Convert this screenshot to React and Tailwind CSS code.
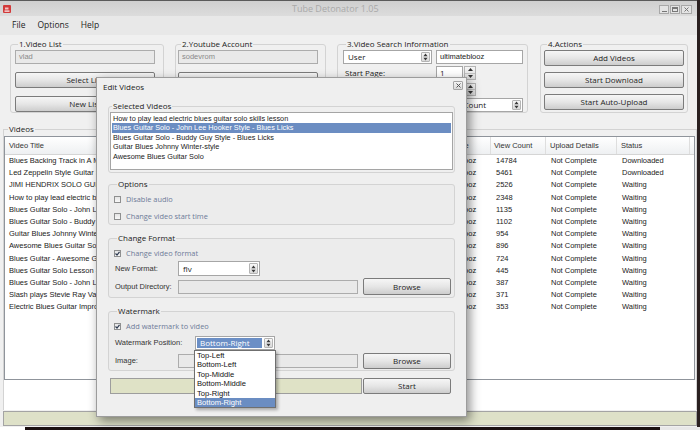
import React from 'react'

const UI = "font-[family-name:'Open_Sans','Noto_Sans',sans-serif]"
const SANS = "font-[family-name:'Liberation_Sans',Arial,sans-serif]"

// titles are only shown up to where the dialog covers them
const videos = [
  ['Blues Backing Track in A Mi', '14784', 'Downloaded'],
  ['Led Zeppelin Style Guitar So', '5461', 'Downloaded'],
  ['JIMI HENDRIX SOLO GUIT', '2526', 'Waiting'],
  ['How to play lead electric blu', '2348', 'Waiting'],
  ['Blues Guitar Solo - John Lee', '1135', 'Waiting'],
  ['Blues Guitar Solo - Buddy Gu', '1102', 'Waiting'],
  ['Guitar Blues Johnny Winter-', '954', 'Waiting'],
  ['Awesome Blues Guitar Solo', '896', 'Waiting'],
  ['Blues Guitar - Awesome Gui', '724', 'Waiting'],
  ['Blues Guitar Solo Lesson - S', '445', 'Waiting'],
  ['Blues Guitar Solo - John Lee ', '387', 'Waiting'],
  ['Slash plays Stevie Ray Vaug', '371', 'Waiting'],
  ['Electric Blues Guitar Improv', '353', 'Waiting'],
]

const selected = [
  'How to play lead electric blues guitar solo skills lesson',
  'Blues Guitar Solo - John Lee Hooker Style - Blues Licks',
  'Blues Guitar Solo - Buddy Guy Style - Blues Licks',
  'Guitar Blues Johnny Winter-style',
  'Awesome Blues Guitar Solo',
]

const positions = ['Top-Left', 'Bottom-Left', 'Top-Middle', 'Bottom-Middle', 'Top-Right', 'Bottom-Right']

const UpDown = () => (
  <svg width="5" height="8" viewBox="0 0 5 8">
    <path d="M2.5 0.5L4.6 3.2H0.4Z M2.5 7.5L4.6 4.8H0.4Z" fill="#3a3a3a" />
  </svg>
)

const Btn = ({ children, className = '' }) => (
  <div
    className={`flex items-center justify-center rounded-[2px] border border-[#7b7b7b] bg-linear-to-b from-[#f6f6f6] via-[#e6e6e6] to-[#cdcdcd] text-[8px] leading-none text-[#1e1e1e] ${UI} ${className}`}
  >
    {children}
  </div>
)

// button partly hidden by the dialog: text is clipped where the dialog starts
const CutBtn = ({ children }) => (
  <Btn className="mt-[8px] h-[16px] w-[140px] !justify-start">
    <div className="h-full w-[80px] overflow-hidden">
      <div className="flex h-full w-[138px] items-center justify-center">{children}</div>
    </div>
  </Btn>
)

const Input = ({ value, className = '' }) => (
  <div
    className={`flex items-center border border-[#acacac] bg-[#e9e9e9] pl-[3px] text-[7.5px] text-[#8a8a8a] ${SANS} ${className}`}
  >
    {value}
  </div>
)

const Select = ({ value, className = '', textClass = '' }) => (
  <div className={`flex items-stretch border border-[#a6a6a6] bg-white p-[1px] ${className}`}>
    <div className={`flex flex-1 items-center pl-[3px] text-[8px] text-[#222] ${UI} ${textClass}`}>{value}</div>
    <div className="ml-[2px] flex w-[9px] items-center justify-center rounded-[1px] border border-[#b4b4b4] bg-linear-to-b from-[#f7f7f7] to-[#dadada]">
      <UpDown />
    </div>
  </div>
)

const Spinner = ({ value, className = '' }) => (
  <div className={`flex items-stretch ${className}`}>
    <div className={`flex flex-1 items-center border border-[#a6a6a6] bg-white pl-[3px] text-[8px] text-[#222] ${UI}`}>{value}</div>
    <div className="ml-[1px] flex w-[12px] flex-col border border-[#b4b4b4] bg-linear-to-b from-[#f5f5f5] to-[#dcdcdc]">
      <div className="flex flex-1 items-center justify-center border-b border-[#c4c4c4]">
        <svg width="5" height="3" viewBox="0 0 5 3"><path d="M2.5 0L5 3H0Z" fill="#333" /></svg>
      </div>
      <div className="flex flex-1 items-center justify-center">
        <svg width="5" height="3" viewBox="0 0 5 3"><path d="M2.5 3L5 0H0Z" fill="#333" /></svg>
      </div>
    </div>
  </div>
)

const Check = ({ checked, label }) => (
  <div className="flex h-[14px] items-center gap-[5px]">
    <div className="flex h-[7px] w-[7px] items-center justify-center border border-[#8e8f8f] bg-linear-to-b from-[#e4e4e4] to-[#f8f8f8]">
      {checked && (
        <svg width="5" height="5" viewBox="0 0 5 5">
          <path d="M0.5 2.5L2 4L4.5 0.8" stroke="#2d3a50" strokeWidth="1.2" fill="none" />
        </svg>
      )}
    </div>
    <span className={`text-[7.4px] leading-[10px] text-[#6d7b98] ${UI}`}>{label}</span>
  </div>
)

const Group = ({ title, className = '', children }) => (
  <fieldset className={`rounded-[3px] border border-[#d3d3d3] ${className}`}>
    <legend className={`ml-[3px] px-[1px] text-[8px] leading-[10px] text-[#222] ${UI}`}>{title}</legend>
    {children}
  </fieldset>
)

const Label = ({ children, className = '' }) => (
  <span className={`text-[7.5px] leading-[10px] text-[#333] ${SANS} ${className}`}>{children}</span>
)

const EditDialog = () => (
  <div className="absolute left-[96px] top-[77px] flex h-[340px] w-[371px] flex-col border border-[#9c9c9c] bg-[#efefef] shadow-[3px_4px_10px_rgba(0,0,0,0.45)]">
    <div className="flex h-[18px] items-center justify-between pl-[6px] pr-[3px]">
      <span className={`text-[8px] text-[#222] ${UI}`}>Edit Videos</span>
      <div className="mt-[-4px] flex h-[9px] w-[10px] items-center justify-center rounded-[1px] border border-[#a4a4a4] bg-linear-to-b from-[#f4f4f4] to-[#d8d8d8]">
        <svg width="5" height="5" viewBox="0 0 5 5">
          <path d="M0.5 0.5L4.5 4.5M4.5 0.5L0.5 4.5" stroke="#555" strokeWidth="1" />
        </svg>
      </div>
    </div>

    <Group title="Selected Videos" className="ml-[11px] mt-[5px] w-[347px] pb-[2px]">
      <div className={`ml-[1px] mt-[1px] h-[58px] w-[343px] border border-[#a5a5a5] bg-white pt-[1px] ${SANS}`}>
        {selected.map((t, i) => (
          <div
            key={t}
            className={`mx-[1px] h-[9.4px] whitespace-nowrap pl-[1px] text-[7.3px] leading-[9.4px] ${
              i === 1 ? 'bg-[#6b8dc2] text-white' : 'text-[#1a1a1a]'
            }`}
          >
            {t}
          </div>
        ))}
      </div>
    </Group>

    <Group title="Options" className="ml-[11px] mt-[6px] w-[347px] bg-[#ececec] pb-[1px] pl-[5px] pt-[3px]">
      <Check label="Disable audio" />
      <div className="mt-[3px]">
        <Check label="Change video start time" />
      </div>
    </Group>

    <Group title="Change Format" className="ml-[11px] mt-[8px] w-[347px] bg-[#ececec] pb-[2px] pl-[5px] pt-[3px]">
      <Check checked label="Change video format" />
      <div className="mt-[1px] flex h-[15px] items-center">
        <Label className="w-[64px] pl-[1px]">New Format:</Label>
        <Select value="flv" className="h-[15px] w-[82px]" />
      </div>
      <div className="mt-[2px] flex h-[17px] items-center">
        <Label className="w-[64px] pl-[1px]">Output Directory:</Label>
        <Input value="" className="h-[14px] w-[180px]" />
        <Btn className="ml-[5px] h-[17px] w-[88px]">Browse</Btn>
      </div>
    </Group>

    <Group title="Watermark" className="ml-[11px] mt-[8px] w-[347px] bg-[#ececec] pb-[1px] pl-[5px] pt-[3px]">
      <Check checked label="Add watermark to video" />
      <div className="mt-[3px] flex h-[14px] items-center">
        <Label className="w-[81px] pl-[1px]">Watermark Position:</Label>
        <div className="relative">
          <Select
            value="Bottom-Right"
            className="h-[14px] w-[80px]"
            textClass="bg-[#6b8fc6] !text-white"
          />
          <div className={`absolute left-[-1px] top-[14px] z-10 w-[82px] border border-[#6f6f6f] bg-white shadow-[2px_2px_3px_rgba(0,0,0,0.3)] ${SANS}`}>
            {positions.map((p) => (
              <div
                key={p}
                className={`h-[9.4px] pl-[2px] text-[7.6px] leading-[9.4px] ${
                  p === 'Bottom-Right' ? 'bg-[#6b8dc2] text-white' : 'text-[#111]'
                }`}
              >
                {p}
              </div>
            ))}
          </div>
        </div>
      </div>
      <div className="mt-[3px] flex h-[16px] items-center">
        <Label className="w-[64px] pl-[1px]">Image:</Label>
        <Input value="" className="h-[14px] w-[180px]" />
        <Btn className="ml-[5px] h-[16px] w-[88px]">Browse</Btn>
      </div>
    </Group>

    <div className="ml-[13px] mt-[7px] flex h-[16px] items-center">
      <div className="h-[16px] w-[252px] border border-[#9d9d9d] bg-[#dfe2c6]" />
      <Btn className="ml-[1px] h-[16px] w-[88px]">Start</Btn>
    </div>
  </div>
)

const App = () => {
  return (
    <div className="relative h-[430px] w-[700px] overflow-hidden bg-[#2a2020]">
      <div className="flex h-[427px] w-[697px] flex-col bg-[#f0f0f0]">
        {/* title bar */}
        <div className="relative flex h-[16px] items-center border-t border-[#5a5a5a] bg-linear-to-b from-[#cfcfcf] to-[#dcdcdc]">
          <svg className="ml-[3px]" width="8" height="8" viewBox="0 0 8 8">
            <rect x="0" y="0" width="8" height="8" rx="1" fill="#d23a3a" />
            <path d="M1.5 5.5h5v1.2h-5z" fill="#fff" />
            <path d="M2 2.5h3.5v2h-3.5z" fill="#f4c3c3" />
          </svg>
          <span className={`flex-1 pl-[281px] text-[9px] text-[#a9a9a9] ${UI}`}>Tube Detonator 1.05</span>
          <div className="mr-[5px] mt-[2px] flex gap-[1px]">
            <div className="flex h-[9px] w-[10px] items-end justify-center border border-[#a8a8a8] bg-[#e4e4e4] pb-[1px]">
              <div className="h-[1px] w-[5px] bg-[#777]" />
            </div>
            <div className="flex h-[9px] w-[10px] items-center justify-center border border-[#a8a8a8] bg-[#e4e4e4]">
              <div className="h-[5px] w-[6px] border border-t-2 border-[#777]" />
            </div>
            <div className="flex h-[9px] w-[11px] items-center justify-center border border-[#a8a8a8] bg-[#e4e4e4]">
              <svg width="5" height="5" viewBox="0 0 5 5">
                <path d="M0.5 0.5L4.5 4.5M4.5 0.5L0.5 4.5" stroke="#777" strokeWidth="1" />
              </svg>
            </div>
          </div>
        </div>

        {/* menu */}
        <div className={`flex h-[19px] items-center gap-[12px] bg-[#e8e8e8] pl-[12px] text-[8.5px] text-[#1e1e1e] ${UI}`}>
          <span>File</span>
          <span>Options</span>
          <span>Help</span>
        </div>

        {/* top groups */}
        <div className="mt-[4px] flex items-start">
          <Group title="1.Video List" className="ml-[10px] w-[154px] pl-[4px] pt-[1px]">
            <Input value="vlad" className="h-[14px] w-[140px]" />
            <CutBtn>Select List</CutBtn>
            <CutBtn>New List</CutBtn>
          </Group>

          <Group title="2.Youtube Account" className="ml-[11px] w-[151px] pl-[2px] pt-[1px]">
            <Input value="sodevrom" className="h-[14px] w-[140px]" />
            <Btn className="mt-[8px] h-[16px] w-[140px]" />
            <Btn className="mt-[8px] h-[16px] w-[140px]" />
          </Group>

          <Group title="3.Video Search Information" className="ml-[11px] w-[191px] pl-[5px] pt-[1px]">
            <div className="flex h-[14px]">
              <Select value="User" className="h-[14px] w-[89px]" />
              <div className={`ml-[4px] flex h-[14px] w-[87px] items-center border border-[#a6a6a6] bg-white pl-[3px] text-[7.5px] text-[#222] ${SANS}`}>
                ultimateblooz
              </div>
            </div>
            <div className="mt-[2px] flex h-[14px] items-center">
              <span className={`w-[93px] pl-[2px] text-[8px] leading-[10px] text-[#222] ${UI}`}>Start Page:</span>
              <Spinner value="1" className="h-[14px] w-[40px]" />
            </div>
            <div className="mt-[3px] flex h-[13px] items-center">
              <span className="w-[93px]" />
              <Spinner value="" className="h-[13px] w-[40px]" />
            </div>
            <div className="mt-[2px] flex h-[14px] items-center">
              <span className="w-[96px]" />
              <Select value="View Count" className="h-[14px] w-[84px]" />
            </div>
          </Group>

          <Group title="4.Actions" className="ml-[12px] w-[148px] pb-[2px] pl-[3px] pt-[1px]">
            <Btn className="h-[16px] w-[140px]">Add Videos</Btn>
            <Btn className="mt-[6px] h-[16px] w-[140px]">Start Download</Btn>
            <Btn className="mt-[6px] h-[16px] w-[140px]">Start Auto-Upload</Btn>
          </Group>
        </div>

        {/* videos */}
        <fieldset className="ml-[3px] mt-[11px] w-[694px] border-x border-t border-[#d3d3d3]">
          <legend className={`ml-[4px] px-[1px] text-[8px] leading-[10px] text-[#222] ${UI}`}>Videos</legend>
          <div className={`mt-[2px] h-[244px] w-[691px] border border-[#8f949b] bg-white ${SANS}`}>
            <div className="grid h-[18px] grid-cols-[425px_61px_55px_71px_73px_1fr] border-b border-[#d5d5d5] bg-linear-to-b from-[#ffffff] to-[#eef0f2] text-[7.5px] text-[#333]">
              <div className="flex items-center border-r border-[#dedede] pl-[4px]">Video Title</div>
              <div className="flex items-center border-r border-[#dedede] pl-[4px]">Username</div>
              <div className="flex items-center border-r border-[#dedede] pl-[3px]">View Count</div>
              <div className="flex items-center border-r border-[#dedede] pl-[4px]">Upload Details</div>
              <div className="flex items-center border-r border-[#dedede] pl-[4px]">Status</div>
              <div />
            </div>
            {videos.map(([title, views, status], i) => (
              <div
                key={i}
                className="grid h-[12.2px] grid-cols-[425px_61px_55px_71px_73px_1fr] text-[7.5px] leading-[12.2px] text-[#222]"
              >
                <div className="w-[91px] overflow-hidden whitespace-nowrap pl-[4px]">{title}</div>
                <div className="overflow-hidden whitespace-nowrap pl-[2px]">ultimateblooz</div>
                <div className="pl-[5px]">{views}</div>
                <div className="pl-[5px]">Not Complete</div>
                <div className="pl-[5px]">{status}</div>
                <div />
              </div>
            ))}
          </div>
          <div className="h-[30px] w-[692px] bg-white" />
        </fieldset>

        <div className="ml-[3px] mt-[1px] h-[15px] w-[694px] border border-[#a4a4a4] bg-[#dee1c8]" />
      </div>

      <div className="flex h-[3px] w-[700px]">
        <div className="w-[25px] bg-white" />
        <div className="flex-1 bg-[#1a1010]" />
        <div className="w-[40px] bg-[#e8e8e8]" />
      </div>

      <EditDialog />
    </div>
  )
}

export default App
